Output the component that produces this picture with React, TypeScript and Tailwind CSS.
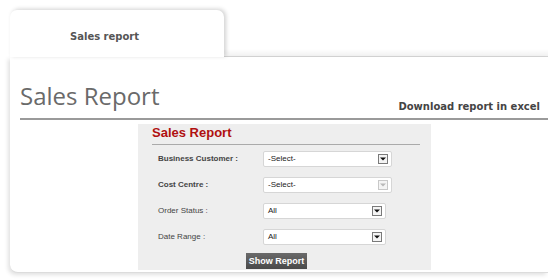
const rows = [
  { label: "Business Customer :", value: "-Select-", bold: true, width: "w-[129px]", disabled: false },
  { label: "Cost Centre :", value: "-Select-", bold: true, width: "w-[129px]", disabled: true },
  { label: "Order Status :", value: "All", bold: false, width: "w-[123px]", disabled: false },
  { label: "Date Range :", value: "All", bold: false, width: "w-[123px]", disabled: false },
];

const arial = { fontFamily: '"Liberation Sans", Arial, sans-serif' };

const SelectBox = ({ value, width, disabled }: { value: string; width: string; disabled: boolean }) => {
  return (
    <div
      className={`${width} h-[16px] bg-white border border-[#d6d6d6] rounded-[2px] flex items-center justify-between pl-[4px] pr-[3px]`}
    >
      <span className="text-[8px] text-[#222] leading-none">{value}</span>
      <span
        className={`w-[10px] h-[10px] border flex items-center justify-center bg-[#f4f4f4] ${
          disabled ? "border-[#c8c8c8]" : "border-[#7a7a7a]"
        }`}
      >
        <svg width="6" height="4" viewBox="0 0 6 4">
          <path d="M0 0.5 L6 0.5 L3 3.5 Z" fill={disabled ? "#b8b8b8" : "#111"} />
        </svg>
      </span>
    </div>
  );
};

function App() {
  return (
    <div
      className="w-[548px] h-[279px] bg-white overflow-hidden flex flex-col"
      style={{ fontFamily: '"DejaVu Sans", Verdana, sans-serif' }}
    >
      <div className="flex items-end h-[57px] shrink-0">
        <div className="ml-[10px] w-[214px] h-[47px] bg-white rounded-t-[7px] shadow-[2px_-1px_4px_rgba(0,0,0,0.18)] relative z-10 pl-[60px] pt-[13px]">
          <span className="text-[10px] font-bold text-[#555]">Sales report</span>
        </div>
        <div className="flex-1 h-[8px] bg-gradient-to-b from-white to-[#f1f1f1] border-b border-[#d4d4d4]" />
      </div>

      <div className="ml-[10px] h-[216px] shrink-0 bg-white rounded-bl-[8px] shadow-[-2px_2px_4px_rgba(0,0,0,0.12)] border-b border-[#dcdcdc] flex flex-col">
        <div className="ml-[10px] h-[63px] shrink-0 border-b-2 border-[#9a9a9a] flex items-end justify-between pr-[8px] pb-[3px]">
          <h1
            className="text-[24px] text-[#6a6a6a] leading-none pb-[7px]"
            style={{ fontFamily: '"Open Sans", sans-serif' }}
          >
            Sales Report
          </h1>
          <span className="text-[10px] font-bold text-[#444] pb-[1px]">Download report in excel</span>
        </div>

        <div
          className="ml-[128px] mt-[4px] w-[293px] h-[146px] shrink-0 bg-[#eeeeee] pl-[14px] pr-[11px] flex flex-col"
          style={arial}
        >
          <div className="border-b border-[#aaa] h-[21px] shrink-0 flex items-start pt-[2px]">
            <h2 className="text-[13px] font-bold text-[#b01010] leading-none">Sales Report</h2>
          </div>
          <div className="flex flex-col gap-[10px] mt-[6px] shrink-0">
            {rows.map((r) => (
              <div key={r.label} className="flex items-center h-[16px]">
                <span
                  className={`w-[111px] pl-[6px] text-[8px] text-[#444] ${r.bold ? "font-bold" : ""}`}
                >
                  {r.label}
                </span>
                <SelectBox value={r.value} width={r.width} disabled={r.disabled} />
              </div>
            ))}
          </div>
          <button
            className="block shrink-0 mt-[8px] ml-[94px] w-[61px] h-[16px] bg-gradient-to-b from-[#6a6a6a] to-[#4a4a4a] text-white text-[9px] font-bold leading-none whitespace-nowrap"
          >
            Show Report
          </button>
        </div>
      </div>
    </div>
  );
}

export default App;
